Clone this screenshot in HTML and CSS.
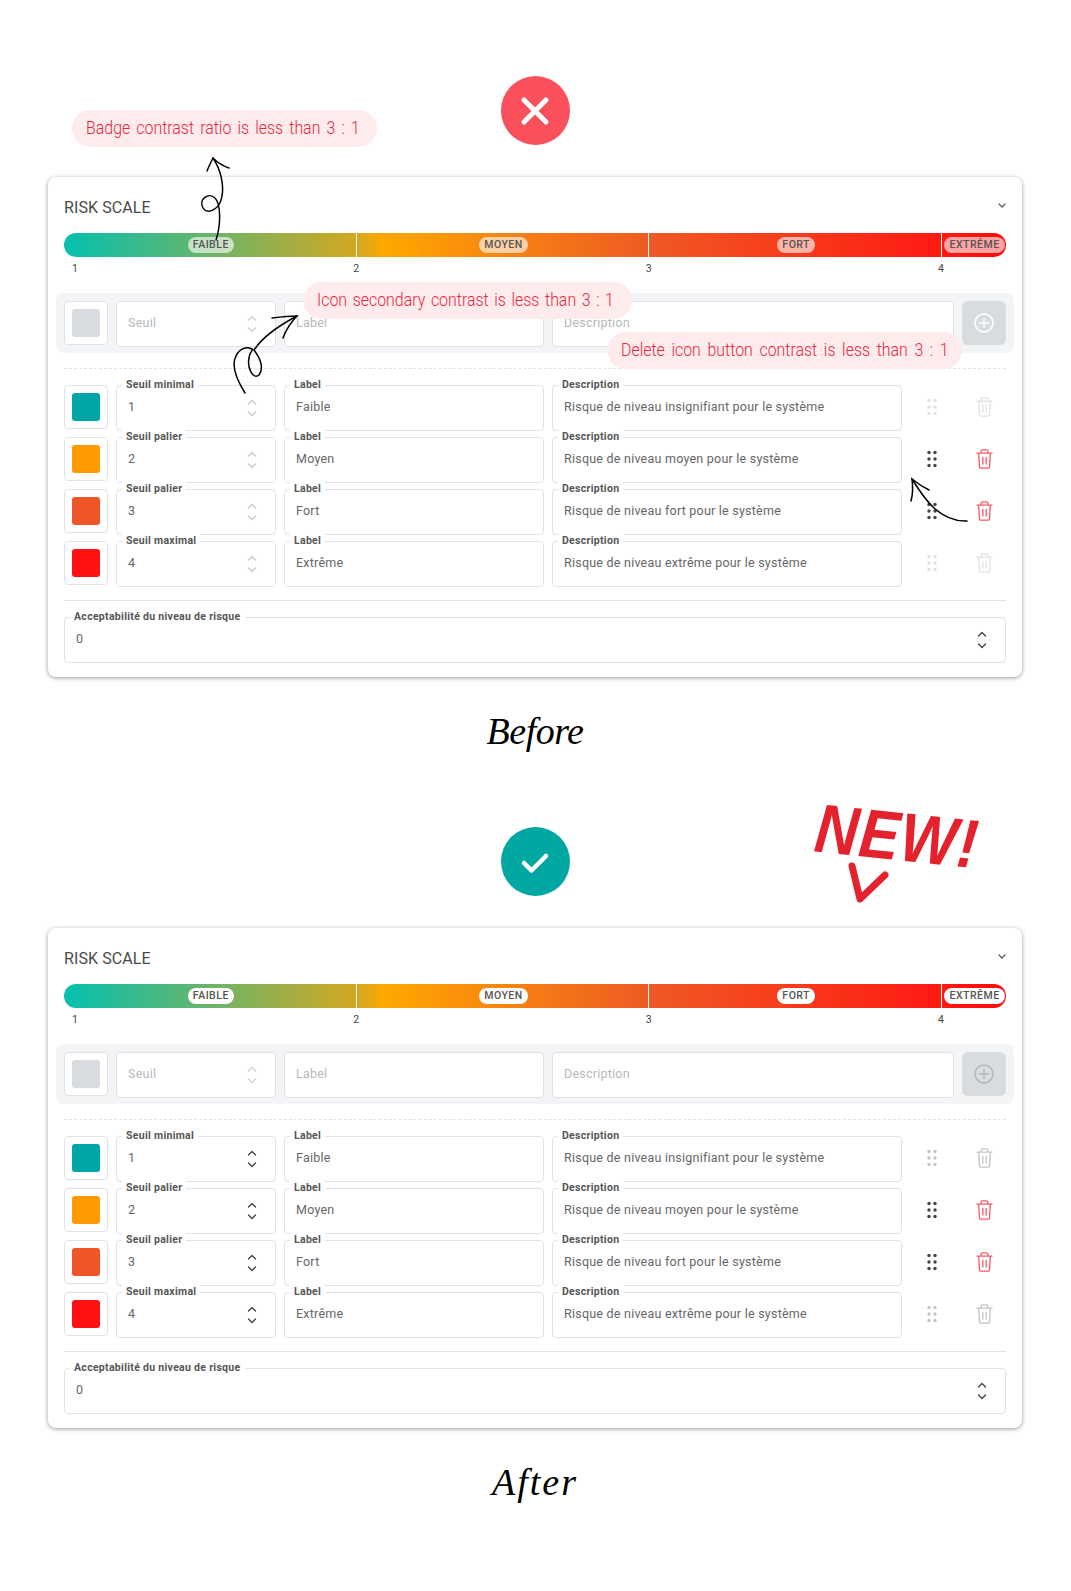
FILE: index.html
```html
<!DOCTYPE html>
<html lang="fr">
<head>
    <meta charset="UTF-8">
    <meta name="viewport" content="width=device-width, initial-scale=1.0">
    <title>Risk scale - before / after</title>
    <link rel="stylesheet" href="styles.css">
</head>
<body>

    <svg class="sprite" width="0" height="0">
        <symbol id="spin" viewBox="0 0 10 18"><path d="M1.5 5L5 1.5 8.5 5M1.5 13L5 16.5 8.5 13" fill="none" stroke="currentColor" stroke-width="1.4" stroke-linecap="round" stroke-linejoin="round"/></symbol>
        <symbol id="drag" viewBox="0 0 12 18"><g fill="currentColor"><circle cx="3" cy="2.5" r="1.7"/><circle cx="9" cy="2.5" r="1.7"/><circle cx="3" cy="9" r="1.7"/><circle cx="9" cy="9" r="1.7"/><circle cx="3" cy="15.5" r="1.7"/><circle cx="9" cy="15.5" r="1.7"/></g></symbol>
        <symbol id="trash" viewBox="0 0 20 24"><path d="M1 5h18M6 5V2.5A1.5 1.5 0 0 1 7.5 1h5A1.5 1.5 0 0 1 14 2.5V5M3 5l1 16.5A1.5 1.5 0 0 0 5.5 23h9a1.5 1.5 0 0 0 1.5-1.5L17 5M8 10v8M12 10v8" fill="none" stroke="currentColor" stroke-width="1.6" stroke-linecap="round" stroke-linejoin="round"/></symbol>
        <symbol id="plus" viewBox="0 0 20 20"><circle cx="10" cy="10" r="9" fill="none" stroke="currentColor" stroke-width="1.5"/><path d="M10 5.5v9M5.5 10h9" fill="none" stroke="currentColor" stroke-width="1.5" stroke-linecap="round"/></symbol>
        <symbol id="caret" viewBox="0 0 8 5"><path d="M1 1l3 3 3-3" fill="none" stroke="currentColor" stroke-width="1.2" stroke-linecap="round" stroke-linejoin="round"/></symbol>
    </svg>

    <!-- before -->
    <section class="compare before">
        <div class="status status-bad">
            <svg width="34" height="34" viewBox="0 0 34 34"><path d="M6 6l22 22M28 6L6 28" stroke="#fff" stroke-width="5" stroke-linecap="round"/></svg>
        </div>

        <div class="card">
            <div class="card-head"><h2>RISK SCALE</h2><svg class="caret"><use href="#caret"/></svg></div>

            <div class="bar">
                <div class="seg"><span class="badge">FAIBLE</span></div>
                <div class="seg"><span class="badge">MOYEN</span></div>
                <div class="seg"><span class="badge">FORT</span></div>
                <div class="seg seg-end"><span class="badge">EXTRÊME</span></div>
            </div>
            <div class="ticks">
                <div class="tick"><span>1</span></div>
                <div class="tick"><span>2</span></div>
                <div class="tick"><span>3</span></div>
                <div class="tick tick-end"><span>4</span></div>
            </div>

            <div class="new-row">
                <div class="swatch"><i class="c-off"></i></div>
                <div class="field off"><span class="val">Seuil</span><svg class="spin"><use href="#spin"/></svg></div>
                <div class="field off"><span class="val">Label</span></div>
                <div class="field off"><span class="val">Description</span></div>
                <div class="add"><svg width="20" height="20"><use href="#plus"/></svg></div>
            </div>

            <div class="levels">
                <div class="level">
                    <div class="swatch"><i class="c-teal"></i></div>
                    <div class="field"><label>Seuil minimal</label><span class="val">1</span><svg class="spin"><use href="#spin"/></svg></div>
                    <div class="field"><label>Label</label><span class="val">Faible</span></div>
                    <div class="field"><label>Description</label><span class="val">Risque de niveau insignifiant pour le système</span></div>
                    <div class="tool drag off-tool"><svg width="12" height="18"><use href="#drag"/></svg></div>
                    <div class="tool del off-tool"><svg width="17" height="20"><use href="#trash"/></svg></div>
                </div>
                <div class="level">
                    <div class="swatch"><i class="c-orange"></i></div>
                    <div class="field"><label>Seuil palier</label><span class="val">2</span><svg class="spin"><use href="#spin"/></svg></div>
                    <div class="field"><label>Label</label><span class="val">Moyen</span></div>
                    <div class="field"><label>Description</label><span class="val">Risque de niveau moyen pour le système</span></div>
                    <div class="tool drag"><svg width="12" height="18"><use href="#drag"/></svg></div>
                    <div class="tool del"><svg width="17" height="20"><use href="#trash"/></svg></div>
                </div>
                <div class="level">
                    <div class="swatch"><i class="c-fire"></i></div>
                    <div class="field"><label>Seuil palier</label><span class="val">3</span><svg class="spin"><use href="#spin"/></svg></div>
                    <div class="field"><label>Label</label><span class="val">Fort</span></div>
                    <div class="field"><label>Description</label><span class="val">Risque de niveau fort pour le système</span></div>
                    <div class="tool drag"><svg width="12" height="18"><use href="#drag"/></svg></div>
                    <div class="tool del"><svg width="17" height="20"><use href="#trash"/></svg></div>
                </div>
                <div class="level">
                    <div class="swatch"><i class="c-red"></i></div>
                    <div class="field"><label>Seuil maximal</label><span class="val">4</span><svg class="spin"><use href="#spin"/></svg></div>
                    <div class="field"><label>Label</label><span class="val">Extrême</span></div>
                    <div class="field"><label>Description</label><span class="val">Risque de niveau extrême pour le système</span></div>
                    <div class="tool drag off-tool"><svg width="12" height="18"><use href="#drag"/></svg></div>
                    <div class="tool del off-tool"><svg width="17" height="20"><use href="#trash"/></svg></div>
                </div>
            </div>

            <div class="field accept"><label>Acceptabilité du niveau de risque</label><span class="val">0</span><svg class="spin"><use href="#spin"/></svg></div>
        </div>

        <p class="caption caption-before">Before</p>

        <div class="note note-badge"><span>Badge contrast ratio is less than 3 : 1</span></div>
        <div class="note note-icon"><span>Icon secondary contrast is less than 3 : 1</span></div>
        <div class="note note-delete"><span>Delete icon button contrast is less than 3 : 1</span></div>

        <svg class="arrows" width="1071" height="751" viewBox="0 0 1071 751">
            <g fill="none" stroke="#000" stroke-width="1.5" stroke-linecap="round">
                <path d="M213 158C221 170 224 185 222 196C220 210 207 215 203 208C198 199 209 192 215 198C221 204 221 225 216 240"/>
                <path d="M207 171C209 166 211 162 213 158C218 163 223 166 229 168"/>
                <path d="M297 316C278 326 262 338 254 350C260 358 264 368 259 375C253 380 247 368 249 358C250 350 254 350 252 349C243 345 235 352 234 364C234 375 240 385 245 393"/>
                <path d="M272 318C280 317 289 316 297 316C291 322 286 330 283 338"/>
                <path d="M912 479C925 500 940 522 967 521"/>
                <path d="M929 490C923 487 917 483 912 479C913 487 913 494 911 501"/>
            </g>
        </svg>
    </section>

    <!-- after -->
    <section class="compare after">
        <div class="status status-good">
            <svg width="34" height="34" viewBox="0 0 34 34"><path d="M6 18l7.5 7.5L28 11" fill="none" stroke="#fff" stroke-width="4.5" stroke-linecap="round" stroke-linejoin="round"/></svg>
        </div>

        <div class="card">
            <div class="card-head"><h2>RISK SCALE</h2><svg class="caret"><use href="#caret"/></svg></div>

            <div class="bar">
                <div class="seg"><span class="badge">FAIBLE</span></div>
                <div class="seg"><span class="badge">MOYEN</span></div>
                <div class="seg"><span class="badge">FORT</span></div>
                <div class="seg seg-end"><span class="badge">EXTRÊME</span></div>
            </div>
            <div class="ticks">
                <div class="tick"><span>1</span></div>
                <div class="tick"><span>2</span></div>
                <div class="tick"><span>3</span></div>
                <div class="tick tick-end"><span>4</span></div>
            </div>

            <div class="new-row">
                <div class="swatch"><i class="c-off"></i></div>
                <div class="field off"><span class="val">Seuil</span><svg class="spin"><use href="#spin"/></svg></div>
                <div class="field off"><span class="val">Label</span></div>
                <div class="field off"><span class="val">Description</span></div>
                <div class="add"><svg width="20" height="20"><use href="#plus"/></svg></div>
            </div>

            <div class="levels">
                <div class="level">
                    <div class="swatch"><i class="c-teal"></i></div>
                    <div class="field"><label>Seuil minimal</label><span class="val">1</span><svg class="spin"><use href="#spin"/></svg></div>
                    <div class="field"><label>Label</label><span class="val">Faible</span></div>
                    <div class="field"><label>Description</label><span class="val">Risque de niveau insignifiant pour le système</span></div>
                    <div class="tool drag off-tool"><svg width="12" height="18"><use href="#drag"/></svg></div>
                    <div class="tool del off-tool"><svg width="17" height="20"><use href="#trash"/></svg></div>
                </div>
                <div class="level">
                    <div class="swatch"><i class="c-orange"></i></div>
                    <div class="field"><label>Seuil palier</label><span class="val">2</span><svg class="spin"><use href="#spin"/></svg></div>
                    <div class="field"><label>Label</label><span class="val">Moyen</span></div>
                    <div class="field"><label>Description</label><span class="val">Risque de niveau moyen pour le système</span></div>
                    <div class="tool drag"><svg width="12" height="18"><use href="#drag"/></svg></div>
                    <div class="tool del"><svg width="17" height="20"><use href="#trash"/></svg></div>
                </div>
                <div class="level">
                    <div class="swatch"><i class="c-fire"></i></div>
                    <div class="field"><label>Seuil palier</label><span class="val">3</span><svg class="spin"><use href="#spin"/></svg></div>
                    <div class="field"><label>Label</label><span class="val">Fort</span></div>
                    <div class="field"><label>Description</label><span class="val">Risque de niveau fort pour le système</span></div>
                    <div class="tool drag"><svg width="12" height="18"><use href="#drag"/></svg></div>
                    <div class="tool del"><svg width="17" height="20"><use href="#trash"/></svg></div>
                </div>
                <div class="level">
                    <div class="swatch"><i class="c-red"></i></div>
                    <div class="field"><label>Seuil maximal</label><span class="val">4</span><svg class="spin"><use href="#spin"/></svg></div>
                    <div class="field"><label>Label</label><span class="val">Extrême</span></div>
                    <div class="field"><label>Description</label><span class="val">Risque de niveau extrême pour le système</span></div>
                    <div class="tool drag off-tool"><svg width="12" height="18"><use href="#drag"/></svg></div>
                    <div class="tool del off-tool"><svg width="17" height="20"><use href="#trash"/></svg></div>
                </div>
            </div>

            <div class="field accept"><label>Acceptabilité du niveau de risque</label><span class="val">0</span><svg class="spin"><use href="#spin"/></svg></div>
        </div>

        <p class="caption caption-after">After</p>

        <span class="new-tag">NEW!</span>
        <svg class="new-mark" width="50" height="50" viewBox="0 0 50 50"><path d="M6 5l8 33L39 14" fill="none" stroke="#e4222e" stroke-width="7" stroke-linecap="round" stroke-linejoin="round"/></svg>
    </section>

</body>
</html>
```

FILE: styles.css
```css
* {
    box-sizing: border-box;
}
body {
    margin: 0;
    background: #fff;
    color: #555;
    font-family: Roboto, Arial, sans-serif;
}
.sprite {
    display: block;
}
.compare {
    position: relative;
    padding: 76px 49px 0 48px;
}
.before {
    height: 751px;
}
.after {
    height: 840px;
}

.status {
    width: 69px;
    height: 69px;
    margin: 0 auto 32px;
    border-radius: 50%;
    display: flex;
    align-items: center;
    justify-content: center;
}
.status-bad {
    background: #f9505c;
}
.status-good {
    background: #00a8a1;
}

.card {
    height: 500px;
    padding: 20px 16px 14px;
    background: #fff;
    border-radius: 8px;
    box-shadow: 0 1px 4px rgba(0, 0, 0, 0.4);
}
.card-head {
    height: 20px;
    display: flex;
    align-items: center;
    justify-content: space-between;
}
.card-head h2 {
    margin: 0;
    font-size: 16px;
    font-weight: 400;
    letter-spacing: 0.1px;
    color: #4a4a4a;
}
.caret {
    width: 8px;
    height: 5px;
    margin: -4px 0 0;
    color: #555;
}

.bar {
    height: 24px;
    margin-top: 16px;
    display: flex;
    border-radius: 12px;
    overflow: hidden;
    background: linear-gradient(90deg, #04c0b0 0%, #d3a822 31%, #ffa800 34%, #ee5a24 62%, #ff1e14 91%, #ff0a0a 100%);
}
.seg {
    flex: 1;
    display: flex;
    align-items: center;
    justify-content: center;
    padding-left: 2px;
    border-left: 1px solid #fff;
}
.seg:first-child {
    border-left: none;
}
.seg-end {
    flex: 0 0 65px;
    padding-left: 1px;
}
.badge {
    height: 16px;
    padding: 0 5px;
    border-radius: 8px;
    font-size: 10.5px;
    font-weight: 500;
    line-height: 16px;
    letter-spacing: 0.5px;
    color: #555;
    background: #fff;
}
.before .badge {
    background: rgba(255, 255, 255, 0.62);
}

.ticks {
    height: 14px;
    margin-top: 5px;
    margin-bottom: -1px;
    display: flex;
    font-size: 10.5px;
    line-height: 14px;
    color: #444;
}
.tick {
    flex: 1;
}
.tick span {
    margin-left: -3px;
}
.tick:first-child span {
    margin-left: 8px;
}
.tick-end {
    flex: 0 0 65px;
}

.new-row {
    display: grid;
    grid-template-columns: 44px 160px 260px 1fr 44px;
    gap: 8px;
    margin: 18px -8px 0;
    padding: 8px 8px 6px;
    background: #f3f4f6;
    border-radius: 8px;
}
.levels {
    margin-top: 15px;
    padding-top: 16px;
    padding-bottom: 13px;
    border-top: 1px dashed #e2e4e8;
    display: flex;
    flex-direction: column;
    gap: 6px;
}
.level {
    display: grid;
    grid-template-columns: 44px 160px 260px 1fr 44px 44px;
    gap: 8px;
}

.swatch {
    width: 44px;
    height: 44px;
    display: flex;
    align-items: center;
    justify-content: center;
    background: #fff;
    border: 1px solid #dfe2e8;
    border-radius: 4px;
}
.swatch i {
    width: 28px;
    height: 28px;
    border-radius: 3px;
}
.c-off { background: #d8dbe0; }
.c-teal { background: #00a6a6; }
.c-orange { background: #ff9a00; }
.c-fire { background: #ef5527; }
.c-red { background: #ff1212; }

.field {
    position: relative;
    height: 46px;
    padding: 0 18px 3px 11px;
    display: flex;
    align-items: center;
    justify-content: space-between;
    background: #fff;
    border: 1px solid #dfe2e8;
    border-radius: 4px;
}
.field label {
    position: absolute;
    top: -8px;
    left: 5px;
    padding: 0 4px;
    background: #fff;
    font-size: 10.5px;
    font-weight: 700;
    line-height: 13px;
    letter-spacing: 0.3px;
    color: #555;
}
.val {
    font-size: 12.5px;
    letter-spacing: 0.23px;
    color: #666;
}
.spin {
    width: 10px;
    height: 18px;
    margin-top: 3px;
    color: #c9ccd1;
}
.after .spin {
    color: #444;
}
.off .val {
    color: #b6b8bc;
}
.off .spin,
.after .off .spin {
    color: #d0d2d6;
}

.accept {
    margin-top: 17px;
    padding-right: 18px;
}
.accept .spin,
.after .accept .spin {
    color: #444;
}
.levels + .accept::before {
    content: "";
    position: absolute;
    top: -18px;
    left: -1px;
    right: -1px;
    border-top: 1px solid #dfe2e8;
}

.add {
    width: 44px;
    height: 44px;
    display: flex;
    align-items: center;
    justify-content: center;
    background: #d8dbe0;
    border-radius: 6px;
    color: #fff;
}
.after .add {
    color: #b4b7bc;
}

.tool {
    height: 46px;
    padding-bottom: 2px;
    display: flex;
    align-items: center;
    justify-content: center;
}
.drag {
    color: #444;
}
.del {
    color: #fa5a68;
}
.off-tool {
    color: #e0e2e6;
}
.after .off-tool {
    color: #c4c4c4;
}

.caption {
    height: 74px;
    margin: 0;
    padding-top: 26px;
    text-align: center;
    font-family: "Liberation Serif", serif;
    font-style: italic;
    font-size: 38px;
    line-height: 56px;
    color: #000;
}
.caption-before {
    letter-spacing: -0.5px;
}
.caption-after {
    letter-spacing: 2px;
}

/* annotations on top of the card */
.note {
    position: absolute;
    height: 37px;
    padding: 0 14px;
    border-radius: 19px;
    background: #feeced;
    color: #e8273c;
    font-size: 18.5px;
    font-weight: 300;
    line-height: 37px;
    white-space: nowrap;
}
.note span {
    display: inline-block;
    word-spacing: 2px;
    transform: scaleX(0.86);
    transform-origin: left center;
}
.note-badge {
    top: 110px;
    left: 72px;
    width: 305px;
}
.note-badge span {
    word-spacing: 2.6px;
}
.note-icon {
    top: 282px;
    left: 303px;
    width: 329px;
}
.note-delete {
    top: 332px;
    left: 607px;
    width: 355px;
}
.note-delete span {
    word-spacing: 3.2px;
}
.arrows {
    position: absolute;
    top: 0;
    left: 0;
}

.new-tag {
    position: absolute;
    top: 51px;
    left: 815px;
    font-family: "Liberation Sans", sans-serif;
    font-style: italic;
    font-weight: 700;
    font-size: 60px;
    line-height: 70px;
    letter-spacing: 1px;
    color: #e4222e;
    transform: rotate(6deg) scaleY(1.15);
}
.new-mark {
    position: absolute;
    top: 110px;
    left: 846px;
}
```
